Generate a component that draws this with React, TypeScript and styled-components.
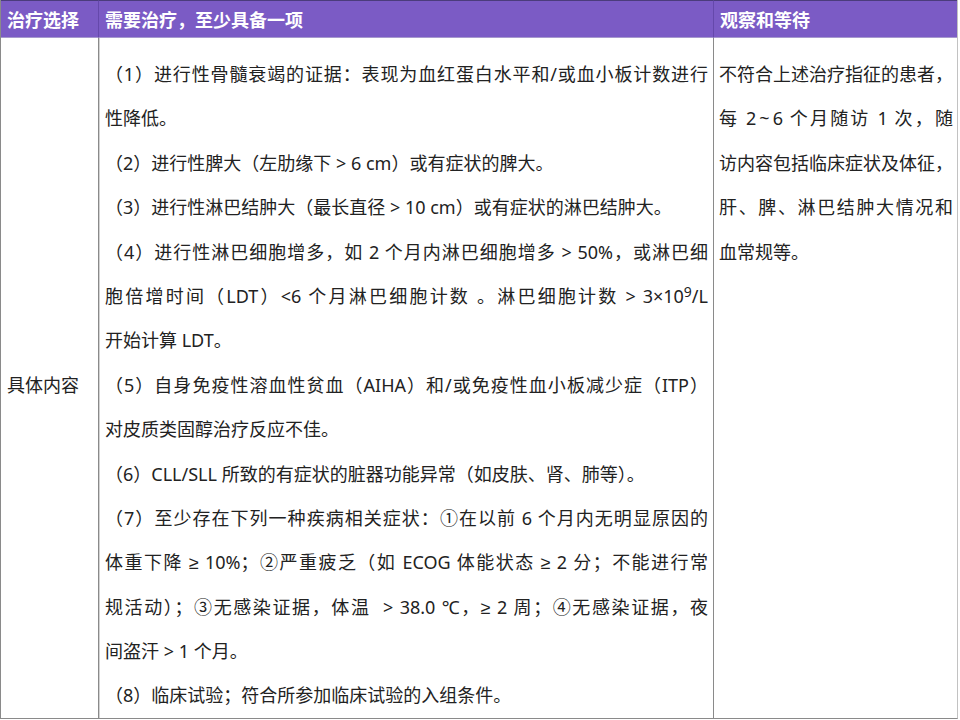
import { FunctionComponent, ReactNode } from 'react';
import styled, { createGlobalStyle } from 'styled-components';

const GlobalStyle = createGlobalStyle`
    body {
        margin: 0;
        background: #ffffff;
        font-family: "Noto Sans", "Liberation Sans", "Noto Sans CJK SC", sans-serif;
        color: #222222;
    }
`;

const Table = styled.div`
    display: grid;
    grid-template-columns: 98px 615px 243px;
    width: 958px;
    border-left: 1px solid #8a8a8a;
    border-right: 1px solid #c2c2c2;
    border-bottom: 1px solid #8a8a8a;
    box-sizing: border-box;
    font-size: 18px;
`;

const HeadCell = styled.div<{ $last?: boolean }>`
    height: 38px;
    box-sizing: border-box;
    display: flex;
    align-items: center;
    padding: 0 ${p => (p.$last ? 4 : 5)}px 1px 6px;
    background-color: #7b5bc5;
    color: #ffffff;
    font-weight: bold;
    border-top: 1px solid #4b3c7c;
    border-bottom: 1px solid #a699cd;
    border-right: ${p => (p.$last ? 'none' : '1px solid #6548ab')};
`;

const LabelCell = styled.div`
    display: flex;
    align-items: center;
    padding: 14px 6px 0 6px;
    border-right: 1px solid #8a8a8a;
    box-shadow: 1px 0 0 #d2d2d2;
    line-height: 44.4px;
`;

const TextCell = styled.div<{ $pad: number; $divider?: boolean }>`
    padding: 14px ${p => p.$pad}px 0 ${p => p.$pad + 1}px;
    border-right: ${p => (p.$divider ? '1px solid #8a8a8a' : 'none')};
    min-width: 0;
`;

const Row = styled.div<{ $full?: boolean }>`
    line-height: 44.4px;
    height: 44.4px;
    text-align: justify;
    text-align-last: ${p => (p.$full ? 'justify' : 'left')};
    white-space: nowrap;
`;

const Sup = styled.span`
    font-size: 14px;
    vertical-align: 6px;
    line-height: 0;
`;

type Line = { text: ReactNode; full?: boolean };

const treatLines: Line[] = [
    { text: '（1）进行性骨髓衰竭的证据：表现为血红蛋白水平和/或血小板计数进行', full: true },
    { text: '性降低。' },
    { text: '（2）进行性脾大（左肋缘下 > 6 cm）或有症状的脾大。' },
    { text: '（3）进行性淋巴结肿大（最长直径 > 10 cm）或有症状的淋巴结肿大。' },
    { text: '（4）进行性淋巴细胞增多，如 2 个月内淋巴细胞增多 > 50%，或淋巴细', full: true },
    {
        text: <>胞倍增时间（LDT）&lt;6 个月淋巴细胞计数 。淋巴细胞计数 &gt; 3×10<Sup>9</Sup>/L</>,
        full: true,
    },
    { text: '开始计算 LDT。' },
    { text: '（5）自身免疫性溶血性贫血（AIHA）和/或免疫性血小板减少症（ITP）', full: true },
    { text: '对皮质类固醇治疗反应不佳。' },
    { text: '（6）CLL/SLL 所致的有症状的脏器功能异常（如皮肤、肾、肺等）。' },
    { text: '（7）至少存在下列一种疾病相关症状：①在以前 6 个月内无明显原因的', full: true },
    { text: '体重下降 ≥ 10%；②严重疲乏（如 ECOG 体能状态 ≥ 2 分；不能进行常', full: true },
    { text: '规活动）；③无感染证据，体温\u00a0 > 38.0 ℃，≥ 2 周；④无感染证据，夜', full: true },
    { text: '间盗汗 > 1 个月。' },
    { text: '（8）临床试验；符合所参加临床试验的入组条件。' },
];

const watchLines: Line[] = [
    { text: '不符合上述治疗指征的患者，', full: true },
    { text: '每 2\u2009~\u20096 个月随访 1 次，随', full: true },
    { text: '访内容包括临床症状及体征，', full: true },
    { text: '肝、脾、淋巴结肿大情况和', full: true },
    { text: '血常规等。' },
];

const Lines: FunctionComponent<{ lines: Line[] }> = ({ lines }) => (
    <>
        {lines.map((l, i) => (
            <Row key={i} $full={l.full}>
                {l.text}
            </Row>
        ))}
    </>
);

export default function App() {
    return (
        <>
            <GlobalStyle />
            <Table>
                <HeadCell>治疗选择</HeadCell>
                <HeadCell>需要治疗，至少具备一项</HeadCell>
                <HeadCell $last>观察和等待</HeadCell>

                <LabelCell>具体内容</LabelCell>
                <TextCell $pad={5} $divider>
                    <Lines lines={treatLines} />
                </TextCell>
                <TextCell $pad={4}>
                    <Lines lines={watchLines} />
                </TextCell>
            </Table>
        </>
    );
}
